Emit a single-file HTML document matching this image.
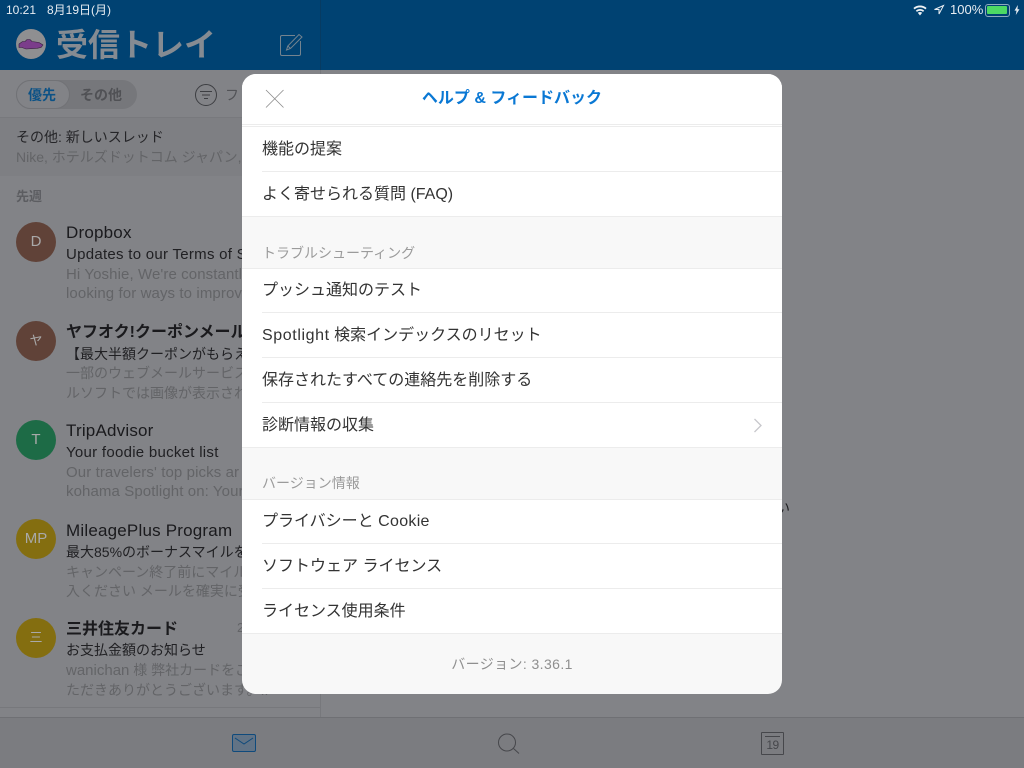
<!DOCTYPE html>
<html lang="ja"><head><meta charset="utf-8"><style>
html,body{margin:0;padding:0;width:1024px;height:768px;overflow:hidden;background:#828387}
body{position:relative;font-family:"Liberation Sans","Noto Sans CJK JP",sans-serif}
.t{position:absolute;white-space:nowrap;line-height:20px}
.b{position:absolute}
.s{font-size:17px;letter-spacing:.2px;color:#1a1a1d}.sj{font-size:16px;letter-spacing:0;color:#1a1a1d;font-weight:bold}
.u{font-size:14px;color:#202023}.ul{font-size:15px;letter-spacing:.28px;color:#202023}
.p{font-size:14px;color:#636467}.pl{font-size:15px;letter-spacing:.1px;color:#636467}
.av{position:absolute;left:16px;width:40px;height:40px;border-radius:50%;color:#a9a9a9;font-size:15px;line-height:40px;text-align:center}
.r{position:absolute;left:20px;font-size:16px;color:#333;white-space:nowrap;line-height:20px}
.sec{position:absolute;left:20px;font-size:14px;color:#9b9b9b;white-space:nowrap;line-height:20px}
.l{position:absolute;height:1px;background:#ececec}
</style></head><body>
<div class="b" style="left:0;top:0;width:1024px;height:70px;background:#004272"></div>
<div class="b" style="left:320px;top:0;width:1px;height:70px;background:#073b62"></div>
<div class="t" style="left:6px;top:0;font-size:12px;color:#e8edf2;line-height:20px">10:21</div>
<div class="t" style="left:47px;top:0;font-size:12px;color:#e8edf2;line-height:20px">8月19日(月)</div>
<svg class="b" style="left:911px;top:3px" width="18" height="14" viewBox="0 0 18 14"><path d="M9 12.500L6.800 9.800a3.400 3.400 0 0 1 4.400 0zM4.800 7.600a6.400 6.400 0 0 1 8.400 0l-1.100 1.300a4.700 4.700 0 0 0-6.200 0zM2.400 5a10 10 0 0 1 13.200 0l-1.200 1.400a8.200 8.200 0 0 0-10.800 0z" fill="#eef2f5"/></svg>
<svg class="b" style="left:933px;top:4px" width="12" height="12" viewBox="0 0 12 12"><path d="M10.500 1.500L1.500 5.500H6V10z" fill="none" stroke="#e8edf2" stroke-width="1"/></svg>
<div class="t" style="left:950px;top:0;font-size:13px;color:#e8edf2">100%</div>
<div class="b" style="left:985px;top:4px;width:23px;height:11px;border:1px solid #8fa9bf;border-radius:3px;box-sizing:content-box"></div>
<div class="b" style="left:987px;top:6px;width:20px;height:8px;background:#4cd964;border-radius:1px"></div>
<svg class="b" style="left:1014px;top:5px" width="6" height="10" viewBox="0 0 6 10"><path d="M3.800 0L.5 5.600h2L1.800 10 5.500 4.200h-2z" fill="#e8edf2"/></svg>

<div class="b" style="left:16px;top:29px;width:30px;height:30px;border-radius:50%;background:#8f8f91"></div>
<svg class="b" style="left:16px;top:29px" width="30" height="30" viewBox="0 0 30 30"><path d="M3 15l3.500-2.500H9l2-2h3l2 2 7 1 4 2.500-2 2.500-4 .8-11 .7-4-1.500H3z" fill="#7b3d8b" stroke="#33203a" stroke-width=".6"/></svg>
<div class="t" style="left:56px;top:25px;font-size:32px;font-weight:bold;color:#858b92;line-height:40px">受信トレイ</div>
<svg class="b" style="left:278px;top:32px" width="26" height="26" viewBox="0 0 26 26" fill="none" stroke="#74838f" stroke-width="1"><path d="M17 3.500H4A1.500 1.500 0 0 0 2.500 5v17A1.500 1.500 0 0 0 4 23.500h17a1.500 1.500 0 0 0 1.500-1.500V9"/><path d="M8.500 18l1.300-4L21 2.500l3 2.500L12.500 16.500zM9.800 14l2.700 2.500"/></svg>

<div class="b" style="left:16px;top:80px;width:121px;height:29px;border-radius:15px;background:#76777b"></div>
<div class="b" style="left:16px;top:80px;width:54px;height:29px;border-radius:15px;background:#828387;border:1px solid #717276;box-sizing:border-box"></div>
<div class="t" style="left:28px;top:85px;font-size:14px;font-weight:bold;color:#0c5286">優先</div>
<div class="t" style="left:80px;top:85px;font-size:14px;font-weight:bold;color:#505155">その他</div>
<svg class="b" style="left:195px;top:84px" width="22" height="22" viewBox="0 0 22 22" fill="none" stroke="#3d3e42" stroke-width="1"><circle cx="11" cy="11" r="10.500"/><path d="M5 7.500h12M7 11h8M9 14.500h4"/></svg>
<div class="t" style="left:225px;top:85px;font-size:14px;color:#525357">フ</div>
<div class="b" style="left:0;top:117px;width:320px;height:1px;background:#78797d"></div>
<div class="b" style="left:0;top:118px;width:320px;height:58px;background:#7e7f83"></div>
<div class="t" style="left:16px;top:127px;font-size:14px;color:#252528">その他: 新しいスレッド</div>
<div class="t" style="left:16px;top:147px;font-size:14px;color:#636467">Nike, ホテルズドットコム ジャパン,</div>
<div class="t" style="left:16px;top:187px;font-size:13px;font-weight:bold;color:#5c5d61">先週</div>

<div class="av" style="top:222px;background:#604238">D</div>
<div class="t s" style="left:66px;top:223px">Dropbox</div>
<div class="t ul" style="left:66px;top:245px">Updates to our Terms of S</div>
<div class="t pl" style="left:66px;top:265px">Hi Yoshie, We're constantl</div>
<div class="t pl" style="left:66px;top:284px">looking for ways to improv</div>

<div class="av" style="top:321px;background:#604238;font-size:13px">ヤ</div>
<div class="t sj" style="left:66px;top:323px">ヤフオク!クーポンメール</div>
<div class="t u" style="left:66px;top:344px">【最大半額クーポンがもらえ</div>
<div class="t p" style="left:66px;top:363px">一部のウェブメールサービス</div>
<div class="t p" style="left:66px;top:383px">ルソフトでは画像が表示され</div>

<div class="av" style="top:420px;background:#1d6b46">T</div>
<div class="t s" style="left:66px;top:421px">TripAdvisor</div>
<div class="t ul" style="left:66px;top:443px">Your foodie bucket list</div>
<div class="t pl" style="left:66px;top:463px">Our travelers' top picks ar</div>
<div class="t pl" style="left:66px;top:482px">kohama Spotlight on: Your</div>

<div class="av" style="top:519px;background:#846e10">MP</div>
<div class="t s" style="left:66px;top:521px">MileagePlus Program</div>
<div class="t u" style="left:66px;top:542px">最大85%のボーナスマイルを</div>
<div class="t p" style="left:66px;top:562px">キャンペーン終了前にマイル</div>
<div class="t p" style="left:66px;top:581px">入ください メールを確実に受</div>

<div class="av" style="top:618px;background:#846e10;font-size:13px">三</div>
<div class="t sj" style="left:66px;top:620px">三井住友カード</div>
<div class="t" style="left:237px;top:618px;font-size:13px;color:#636467">2</div>
<div class="t u" style="left:66px;top:640px">お支払金額のお知らせ</div>
<div class="t p" style="left:66px;top:660px"><span style="font-size:15px">wanichan</span> 様 弊社カードをご</div>
<div class="t p" style="left:66px;top:680px">ただきありがとうございます。..</div>

<div class="b" style="left:0;top:707px;width:320px;height:1px;background:#77787c"></div>
<div class="b" style="left:320px;top:70px;width:1px;height:647px;background:#77787c"></div>
<div class="b" style="left:0;top:717px;width:1024px;height:51px;background:#7b7c80;border-top:1px solid #6f7074;box-sizing:border-box"></div>
<svg class="b" style="left:232px;top:734px" width="25" height="19" viewBox="0 0 25 19" fill="none"><rect x=".5" y=".5" width="23" height="17" rx="1.500" fill="#627385" stroke="#0f4a7c"/><path d="M3 4l9 6 9-6" stroke="#0f4a7c"/></svg>
<svg class="b" style="left:496px;top:732px" width="26" height="24" viewBox="0 0 26 24" fill="none" stroke="#46474b" stroke-width="1"><circle cx="11" cy="10.500" r="8.500"/><path d="M17.500 16.500l5.500 5"/></svg>
<div class="b" style="left:761px;top:732px;width:23px;height:23px;border:1px solid #46474b;border-radius:1px;box-sizing:border-box"></div>
<div class="b" style="left:765px;top:736px;width:15px;height:1px;background:#46474b"></div>
<div class="t" style="left:761px;top:737px;width:23px;text-align:center;font-size:12px;letter-spacing:-.5px;color:#46474b;line-height:17px">19</div>
<div class="t" style="left:776px;top:498px;font-size:14px;color:#1d1d20">い</div>

<div class="b" style="left:242px;top:74px;width:540px;height:620px;background:#f8f8f8;border-radius:14px;overflow:hidden">
  <div class="b" style="left:0;top:0;width:540px;height:50px;background:#fff"></div>
  <svg class="b" style="left:23px;top:15px" width="20" height="20" viewBox="0 0 20 20" stroke="#8a8a8a" stroke-width=".8" fill="none"><path d="M1 1l17.500 17.500M18.500 1L1 18.500"/></svg>
  <div class="t" style="left:0;width:540px;text-align:center;top:15px;font-size:16px;font-weight:bold;color:#0a78d4">ヘルプ &amp; フィードバック</div>
  <div class="l" style="left:0;top:50px;width:540px"></div>
  <div class="b" style="left:0;top:51px;width:540px;height:92px;background:#fff"></div>
  <div class="l" style="left:0;top:52px;width:540px"></div>
  <div class="r" style="top:66px">機能の提案</div>
  <div class="l" style="left:20px;top:97px;width:520px"></div>
  <div class="r" style="top:111px">よく寄せられる質問 (FAQ)</div>
  <div class="l" style="left:0;top:142px;width:540px"></div>

  <div class="sec" style="top:169px">トラブルシューティング</div>
  <div class="b" style="left:0;top:194px;width:540px;height:180px;background:#fff"></div>
  <div class="l" style="left:0;top:194px;width:540px"></div>
  <div class="r" style="top:207px">プッシュ通知のテスト</div>
  <div class="l" style="left:20px;top:238px;width:520px"></div>
  <div class="r" style="top:252px"><span style="letter-spacing:.6px">Spotlight</span> 検索インデックスのリセット</div>
  <div class="l" style="left:20px;top:283px;width:520px"></div>
  <div class="r" style="top:297px">保存されたすべての連絡先を削除する</div>
  <div class="l" style="left:20px;top:328px;width:520px"></div>
  <div class="r" style="top:342px">診断情報の収集</div>
  <svg class="b" style="left:511px;top:344px" width="10" height="15" viewBox="0 0 10 15" fill="none" stroke="#c7c7cc" stroke-width="1.300"><path d="M1.500 1l6.500 6.500L1.500 14"/></svg>
  <div class="l" style="left:0;top:373px;width:540px"></div>

  <div class="sec" style="top:399px">バージョン情報</div>
  <div class="b" style="left:0;top:425px;width:540px;height:134px;background:#fff"></div>
  <div class="l" style="left:0;top:425px;width:540px"></div>
  <div class="r" style="top:438px">プライバシーと <span style="letter-spacing:.3px">Cookie</span></div>
  <div class="l" style="left:20px;top:469px;width:520px"></div>
  <div class="r" style="top:483px">ソフトウェア ライセンス</div>
  <div class="l" style="left:20px;top:514px;width:520px"></div>
  <div class="r" style="top:528px">ライセンス使用条件</div>
  <div class="l" style="left:0;top:559px;width:540px"></div>
  <div class="t" style="left:0;width:540px;text-align:center;top:580px;font-size:14px;letter-spacing:.4px;color:#8f8f8f">バージョン: 3.36.1</div>
</div>
</body></html>
